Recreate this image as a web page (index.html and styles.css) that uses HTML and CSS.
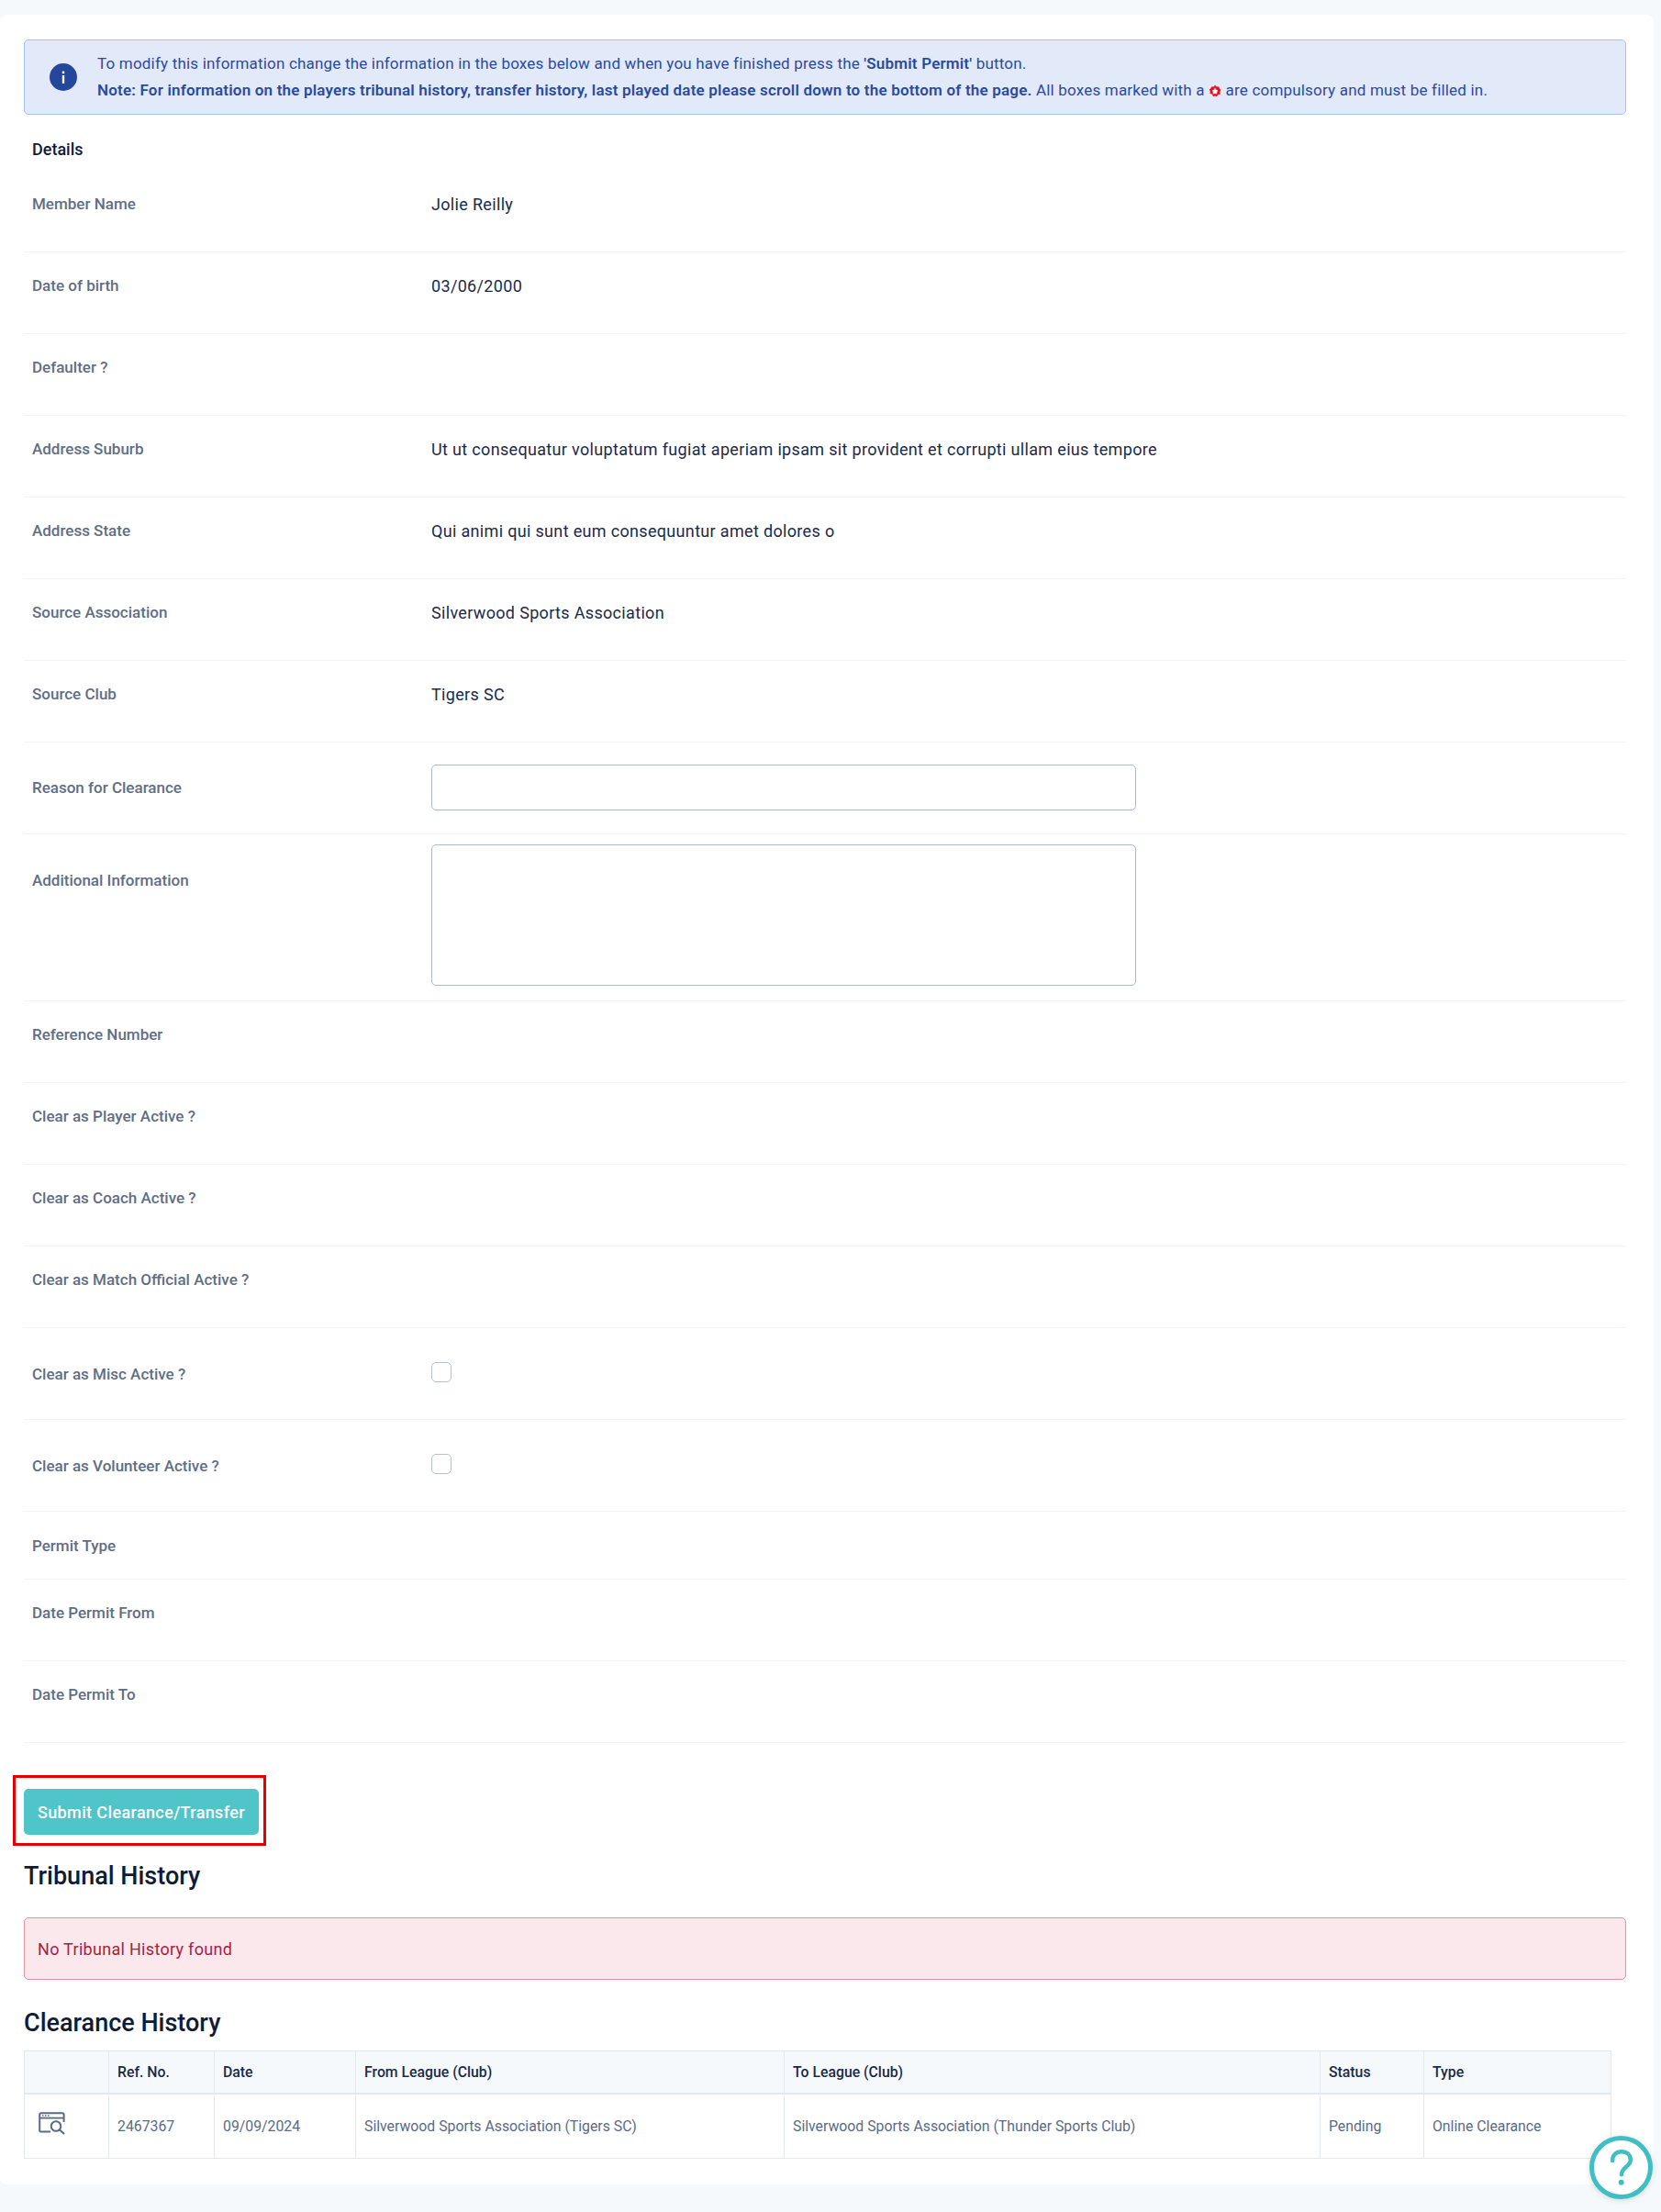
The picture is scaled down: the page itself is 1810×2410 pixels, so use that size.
FILE: index.html
```html
<!DOCTYPE html>
<html lang="en">

<head>
    <meta charset="UTF-8">
    <meta name="viewport" content="width=device-width, initial-scale=1.0">
    <title>Clearance Permit</title>
    <link rel="stylesheet" href="styles.css">
</head>

<body>
    <div class="card">
        <!-- Info box -->
        <div class="info-box">
            <svg class="info-icon" viewBox="0 0 30 30" aria-hidden="true">
                <circle cx="15" cy="15" r="15" fill="#25479b"/>
                <rect x="13.8" y="13" width="2.4" height="9" fill="#fff"/>
                <rect x="13.8" y="8.6" width="2.4" height="2.6" fill="#fff"/>
            </svg>
            <div class="info-text">
                <p>To modify this information change the information in the boxes below and when you have finished press the <b>'Submit Permit'</b> button.</p>
                <p><b>Note: For information on the players tribunal history, transfer history, last played date please scroll down to the bottom of the page.</b> All boxes marked with a
                    <svg class="req-icon" viewBox="0 0 14 14" aria-hidden="true">
                        <path d="M7 .8l1.900 1.700 2.500-.1.500 2.400 1.400 1.200-.8 2.100.2 2.500-2.400.7L8.900 13.200 7 12.400l-1.900.8-1.200-2.400-2.400-.7.200-2.500L.8 5.500l1.400-1 .9-2.100 2.500.1z" fill="#f0101f"/>
                        <path d="M7 3.500l1.200 2.300 1.900.6-1 2.200.1 2-2.200-.6-2.200.6.100-2-1-2.200 1.900-.6z" fill="#fff"/>
                    </svg>
                    are compulsory and must be filled in.</p>
            </div>
        </div>

        <div class="details-title">Details</div>

        <!-- Form rows -->
        <div class="row"><div class="label">Member Name</div><div class="value">Jolie Reilly</div></div>
        <div class="row"><div class="label">Date of birth</div><div class="value">03/06/2000</div></div>
        <div class="row"><div class="label">Defaulter ?</div><div class="value"></div></div>
        <div class="row"><div class="label">Address Suburb</div><div class="value">Ut ut consequatur voluptatum fugiat aperiam ipsam sit provident et corrupti ullam eius tempore</div></div>
        <div class="row"><div class="label">Address State</div><div class="value">Qui animi qui sunt eum consequuntur amet dolores o</div></div>
        <div class="row"><div class="label">Source Association</div><div class="value">Silverwood Sports Association</div></div>
        <div class="row"><div class="label">Source Club</div><div class="value">Tigers SC</div></div>
        <div class="row row-input"><label class="label" for="reason">Reason for Clearance</label><div><input type="text" id="reason" class="field"></div></div>
        <div class="row row-area"><label class="label" for="additional">Additional Information</label><div><textarea id="additional" class="field field-area"></textarea></div></div>
        <div class="row"><div class="label">Reference Number</div><div class="value"></div></div>
        <div class="row"><div class="label">Clear as Player Active ?</div><div class="value"></div></div>
        <div class="row"><div class="label">Clear as Coach Active ?</div><div class="value"></div></div>
        <div class="row"><div class="label">Clear as Match Official Active ?</div><div class="value"></div></div>
        <div class="row row-check"><label class="label" for="misc">Clear as Misc Active ?</label><div><input type="checkbox" id="misc" class="check"></div></div>
        <div class="row row-check"><label class="label" for="volunteer">Clear as Volunteer Active ?</label><div><input type="checkbox" id="volunteer" class="check"></div></div>
        <div class="row row-short"><div class="label">Permit Type</div><div class="value"></div></div>
        <div class="row"><div class="label">Date Permit From</div><div class="value"></div></div>
        <div class="row"><div class="label">Date Permit To</div><div class="value"></div></div>

        <div class="submit-wrap">
            <button type="button" class="submit-btn">Submit Clearance/Transfer</button>
        </div>

        <h2 class="tribunal-title">Tribunal History</h2>
        <div class="danger-box">No Tribunal History found</div>

        <h2 class="clearance-title">Clearance History</h2>
        <table class="history">
            <thead>
                <tr>
                    <th class="col-icon"></th>
                    <th class="col-ref">Ref. No.</th>
                    <th class="col-date">Date</th>
                    <th class="col-from">From League (Club)</th>
                    <th class="col-to">To League (Club)</th>
                    <th class="col-status">Status</th>
                    <th>Type</th>
                </tr>
            </thead>
            <tbody>
                <tr>
                    <td>
                        <svg class="view-icon" viewBox="0 0 30 25" aria-hidden="true">
                            <path d="M13 21.500H2.800Q1.200 21.500 1.200 20V2.800Q1.200 1.200 2.800 1.200H26Q27.600 1.200 27.600 2.800V11" fill="none" stroke="#5a6b85" stroke-width="2"/>
                            <path d="M1.200 6.600H27.600" fill="none" stroke="#5a6b85" stroke-width="1.800"/>
                            <path d="M4 4h1.500M7 4h1.500M10 4h1.500" fill="none" stroke="#5a6b85" stroke-width="1.500"/>
                            <circle cx="19" cy="15.500" r="5.300" fill="none" stroke="#5a6b85" stroke-width="2"/>
                            <path d="M23 19.500L28 24" fill="none" stroke="#5a6b85" stroke-width="2.200"/>
                        </svg>
                    </td>
                    <td>2467367</td>
                    <td>09/09/2024</td>
                    <td>Silverwood Sports Association (Tigers SC)</td>
                    <td>Silverwood Sports Association (Thunder Sports Club)</td>
                    <td>Pending</td>
                    <td>Online Clearance</td>
                </tr>
            </tbody>
        </table>
    </div>

    <!-- Help button -->
    <div class="help-btn">
        <svg viewBox="0 0 60 60" aria-hidden="true">
            <path d="M20.500 22.500C20.500 15.500 25 12.500 30.500 12.500C36.500 12.500 40.500 16 40.500 21.500C40.500 29 30.500 29.500 30.500 38" fill="none" stroke="#3fbfc4" stroke-width="4.500" stroke-linecap="round"/>
            <circle cx="30.200" cy="46.500" r="3" fill="#3fbfc4"/>
        </svg>
    </div>
</body>

</html>
```

FILE: styles.css
```css
body {
    font-family: Roboto, "Liberation Sans", sans-serif;
    margin: 0;
    padding: 16px 8px 30px 0;
    background-color: #f6f9fc;
    color: #1b2a47;
    position: relative;
}

.card {
    background-color: #fff;
    border-radius: 8px;
    padding: 27px 30px 28px 26px;
    height: 2364px;
    box-sizing: border-box;
}

/* Info box */
.info-box {
    display: flex;
    align-items: center;
    height: 82px;
    box-sizing: border-box;
    padding-left: 27px;
    background-color: #e2eafa;
    border: 1px solid #a9c0f2;
    border-radius: 5px;
    color: #2b4a9e;
    font-size: 17px;
    letter-spacing: 0.19px;
}

.info-icon {
    width: 30px;
    height: 30px;
    margin-right: 22px;
    flex: none;
}

.info-text p {
    margin: 0;
    line-height: 29px;
}

.info-text b {
    font-weight: 600;
}

.req-icon {
    width: 14px;
    height: 14px;
    vertical-align: -2px;
}

.details-title {
    padding-left: 9px;
    margin-top: 27px;
    height: 34px;
    line-height: 22px;
    font-size: 18px;
    font-weight: 500;
    color: #101b38;
}

/* Form rows */
.row {
    display: grid;
    grid-template-columns: 435px 1fr;
    align-items: center;
    height: 89px;
    box-sizing: border-box;
    padding: 0 0 16px 9px;
    border-bottom: 1px solid #f1f4f8;
}

.label {
    font-size: 17px;
    font-weight: 500;
    color: #5f6e85;
}

.value {
    font-size: 18px;
    letter-spacing: 0.33px;
    color: #1b2a47;
}

.row-input {
    height: 100px;
    padding-bottom: 1px;
}

.row-area {
    height: 182px;
    align-items: start;
    padding: 11px 0 0 9px;
}

.row-area .label {
    padding-top: 29px;
}

.row-check {
    height: 100px;
    padding-bottom: 0;
}

.row-short {
    height: 74px;
    padding-bottom: 0;
}

.field {
    display: block;
    width: 768px;
    height: 50px;
    box-sizing: border-box;
    border: 1px solid #a9bacb;
    border-radius: 5px;
    background-color: #fff;
    margin: 0;
}

.field-area {
    height: 154px;
    resize: none;
}

.check {
    appearance: none;
    display: block;
    width: 22px;
    height: 22px;
    margin: 0 0 3px;
    border: 1px solid #b4c0cf;
    border-radius: 5px;
    background-color: #fff;
}

/* Submit */
.submit-wrap {
    width: 276px;
    height: 77px;
    box-sizing: border-box;
    margin: 35px 0 0 -12px;
    padding: 12px 0 0 9px;
    border: 3px solid #e60000;
}

.submit-btn {
    display: block;
    width: 256px;
    height: 50px;
    padding: 0;
    border: none;
    border-radius: 5px;
    background-color: #4fc4c9;
    color: #fff;
    font-family: inherit;
    font-size: 18px;
    font-weight: 500;
    letter-spacing: 0.37px;
}

h2 {
    margin: 0;
    color: #101b38;
    font-size: 27px;
    font-weight: 500;
    line-height: 34px;
}

.tribunal-title {
    margin-top: 16px;
}

.danger-box {
    margin-top: 28px;
    height: 68px;
    box-sizing: border-box;
    padding-left: 14px;
    display: flex;
    align-items: center;
    background-color: #fbe8ec;
    border: 1px solid #e68ea6;
    border-radius: 5px;
    color: #a5223f;
    font-size: 18px;
    letter-spacing: 0.3px;
}

.clearance-title {
    margin-top: 30px;
}

/* History table */
.history {
    margin-top: 13px;
    width: 1730px;
    border-collapse: collapse;
    table-layout: fixed;
    font-size: 15.8px;
}

.history th,
.history td {
    box-sizing: border-box;
    border: 1px solid #e3e8ef;
    padding: 0 9px;
    text-align: left;
}

.history th {
    height: 46px;
    background-color: #f6f9fc;
    border-bottom-width: 2px;
    color: #1b2a47;
    font-weight: 500;
}

.history td {
    height: 71px;
    color: #5a6b85;
}

.col-icon { width: 92px; }
.col-ref { width: 115px; }
.col-date { width: 154px; }
.col-from { width: 467px; }
.col-to { width: 584px; }
.col-status { width: 113px; }

.view-icon {
    display: block;
    width: 30px;
    height: 25px;
    margin: -6px 0 0 6px;
}

/* Help button sits over the page */
.help-btn {
    position: absolute;
    left: 1732px;
    top: 2327px;
    width: 69px;
    height: 69px;
    box-sizing: border-box;
    border: 5px solid #3fbfc4;
    border-radius: 50%;
    background-color: #fff;
    box-shadow: 0 1px 6px rgba(0, 0, 0, 0.15);
}

.help-btn svg {
    display: block;
    width: 59px;
    height: 59px;
}
```
